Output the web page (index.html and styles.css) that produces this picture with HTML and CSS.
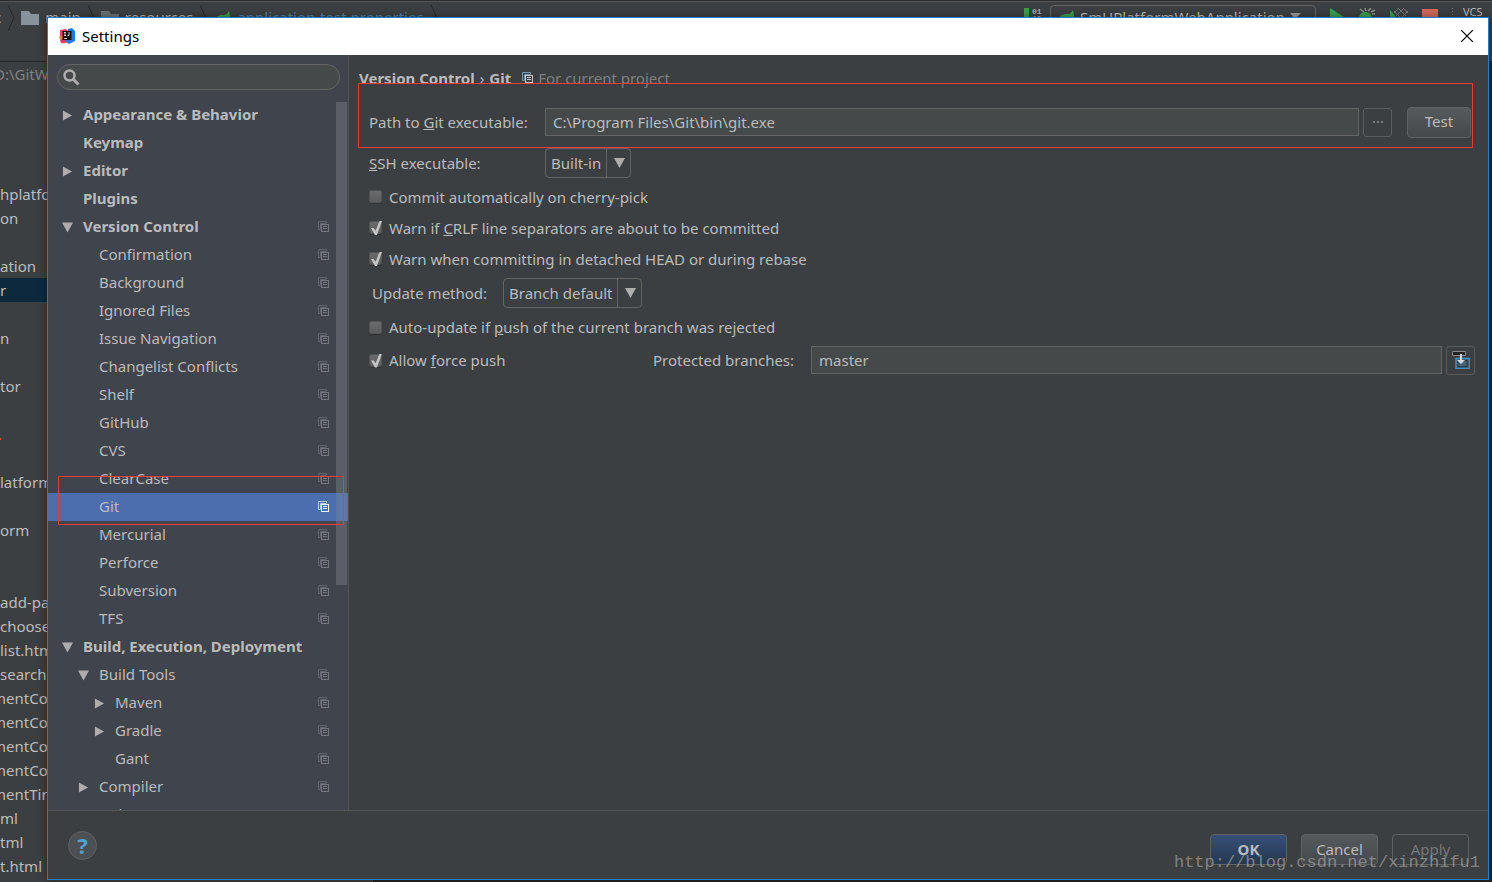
FILE: index.html
```html
<!DOCTYPE html>
<html lang="en">
<head>
<meta charset="utf-8">
<title>Settings</title>
<link rel="stylesheet" href="styles.css">
</head>
<body>
<svg class="defs" aria-hidden="true">
  <symbol id="copy" viewBox="0 0 12 12">
    <path d="M2.5 8.5h-2v-8h8v2M2.500 8V2.500H8" fill="none" stroke="var(--back)"/>
    <rect x="3.5" y="3.5" width="7" height="7" fill="none" stroke="var(--front)"/>
    <path d="M5 5.5h4M5 7.5h4" stroke="var(--front)"/>
  </symbol>
  <symbol id="folder" viewBox="0 0 18 14"><path d="M0 0h8l2 3h8v11H0z" fill="currentColor"/></symbol>
  <symbol id="chev" viewBox="0 0 8 26"><path d="M1 0l6 13-6 13" fill="none" stroke="#26282a" stroke-width="1"/></symbol>
  <symbol id="leaf" viewBox="0 0 18 14"><path d="M1 14C1 6 5 4 10 4c3 0 4-1 6-4 1 5 2 9 0 14z" fill="#3a9e4e"/></symbol>
  <symbol id="right" viewBox="0 0 10 12"><path d="M0 0.500L10 6 0 11.500z" fill="#adadad"/></symbol>
  <symbol id="down" viewBox="0 0 11 10"><path d="M0 0h11L5.500 10z" fill="#adadad"/></symbol>
</svg>

<div class="ide">
  <div class="toolbar">
    <div class="crumbs">
      <span class="src">c</span>
      <svg class="chev"><use href="#chev"/></svg>
      <svg class="folder"><use href="#folder"/></svg><span>main</span>
      <svg class="chev"><use href="#chev"/></svg>
      <svg class="folder dim"><use href="#folder"/></svg><span>resources</span>
      <svg class="chev"><use href="#chev"/></svg>
      <svg class="leaf"><use href="#leaf"/></svg><span class="file">application-test.properties</span>
      <svg class="chev"><use href="#chev"/></svg>
    </div>
    <div class="run">
      <svg width="18" height="18" viewBox="0 0 18 18"><path d="M0 0h5v18H0z" fill="#3a9e4e"/><text x="8" y="6" class="bits">01</text><text x="8" y="13" class="bits">10</text></svg>
      <button class="config"><svg class="leaf"><use href="#leaf"/></svg><span>SmUPlatformWebApplication</span><svg width="11" height="7"><path d="M0 0h11L5 6z" fill="#999"/></svg></button>
      <svg width="14" height="18"><path d="M0 0l14 9-14 9z" fill="#3a9e4e"/></svg>
      <svg width="18" height="18"><path d="M2 1l4 3M7 0l1 3M13 0l-3 3M17 2l-4 2M17 6h-3" stroke="#8a8a8a" stroke-width="1.500"/><path d="M1 10c0-8 12-8 13 0v8H1z" fill="#3a9e4e"/></svg>
      <svg width="18" height="18"><path d="M0 2l7 8-7 6z" fill="#3a9e4e"/><path d="M4 3l8 8M8 0l8 8M13 0l5 5M18 3l-8 8M14 0L6 8M9 0L4 5" stroke="#777" fill="none"/></svg>
      <svg class="stop" width="16" height="16"><path d="M0 0h16v16H0z" fill="#d0695f"/></svg>
      <svg width="1" height="20"><path d="M.5 0v20" stroke="#777" stroke-dasharray="1 2"/></svg>
      <span class="vcs">VCS</span><span class="vcs">VCS</span>
    </div>
  </div>
  <div class="navbar"></div>
  <div class="project">
    <div class="path">D:\GitW</div>
    <ul class="files">
      <li>hplatform</li><li>on</li><li></li><li>ation</li><li class="current">r</li><li></li><li>n</li><li></li><li>tor</li><li></li><li class="mark">.</li><li></li><li>latform</li><li></li><li>orm</li><li></li><li></li><li>add-pay</li><li>choose</li><li>list.html</li><li>search-l</li><li class="cut">mentCo</li><li class="cut">mentCo</li><li class="cut">mentCo</li><li class="cut">mentCo</li><li class="cut">mentTime</li><li>ml</li><li>tml</li><li>t.html</li>
    </ul>
  </div>
</div>

<main class="dialog">
  <header class="titlebar">
    <svg class="logo" viewBox="0 0 16 16"><path d="M1 2l6-1 4 4-8 6-2-3z" fill="#fb3a6a"/><path d="M0 9l5-3 3 9-5 .5z" fill="#f8743b"/><path d="M9 1l4-1 3 3v10l-6 3-4-3z" fill="#167df0"/><path d="M1 12l5-2 1 4-5 1z" fill="#e0356f"/><path d="M3.500 3h9v9h-9z" fill="#111"/><path d="M5 4.500h2M6 4.500v3M5 7.500h2M10 4v3.500H8.500M5 10.500h3" stroke="#ccc" fill="none"/></svg>
    <h1>Settings</h1>
    <button class="close" aria-label="Close"><svg width="12" height="12"><path d="M0 0l12 12M12 0L0 12" stroke="#000" stroke-width="1.200"/></svg></button>
  </header>

  <div class="body">
    <aside class="sidebar">
      <label class="search">
        <svg width="17" height="17"><circle cx="6.500" cy="6.500" r="5" fill="none" stroke="#adadad" stroke-width="2.500"/><path d="M10 10l5.500 5.500" stroke="#adadad" stroke-width="3"/></svg>
        <input type="text" aria-label="Search settings">
      </label>
      <ul class="tree">
        <li class="top"><svg class="tw"><use href="#right"/></svg><span>Appearance &amp; Behavior</span></li>
        <li class="top"><i class="tw"></i><span>Keymap</span></li>
        <li class="top"><svg class="tw"><use href="#right"/></svg><span>Editor</span></li>
        <li class="top"><i class="tw"></i><span>Plugins</span></li>
        <li class="top"><svg class="tw"><use href="#down"/></svg><span>Version Control</span><svg class="copy"><use href="#copy"/></svg></li>
        <li class="sub"><i class="tw"></i><span>Confirmation</span><svg class="copy"><use href="#copy"/></svg></li>
        <li class="sub"><i class="tw"></i><span>Background</span><svg class="copy"><use href="#copy"/></svg></li>
        <li class="sub"><i class="tw"></i><span>Ignored Files</span><svg class="copy"><use href="#copy"/></svg></li>
        <li class="sub"><i class="tw"></i><span>Issue Navigation</span><svg class="copy"><use href="#copy"/></svg></li>
        <li class="sub"><i class="tw"></i><span>Changelist Conflicts</span><svg class="copy"><use href="#copy"/></svg></li>
        <li class="sub"><i class="tw"></i><span>Shelf</span><svg class="copy"><use href="#copy"/></svg></li>
        <li class="sub"><i class="tw"></i><span>GitHub</span><svg class="copy"><use href="#copy"/></svg></li>
        <li class="sub"><i class="tw"></i><span>CVS</span><svg class="copy"><use href="#copy"/></svg></li>
        <li class="sub"><i class="tw"></i><span>ClearCase</span><svg class="copy"><use href="#copy"/></svg></li>
        <li class="sub selected"><i class="tw"></i><span>Git</span><svg class="copy"><use href="#copy"/></svg></li>
        <li class="sub"><i class="tw"></i><span>Mercurial</span><svg class="copy"><use href="#copy"/></svg></li>
        <li class="sub"><i class="tw"></i><span>Perforce</span><svg class="copy"><use href="#copy"/></svg></li>
        <li class="sub"><i class="tw"></i><span>Subversion</span><svg class="copy"><use href="#copy"/></svg></li>
        <li class="sub"><i class="tw"></i><span>TFS</span><svg class="copy"><use href="#copy"/></svg></li>
        <li class="top"><svg class="tw"><use href="#down"/></svg><span>Build, Execution, Deployment</span></li>
        <li class="sub"><svg class="tw"><use href="#down"/></svg><span>Build Tools</span><svg class="copy"><use href="#copy"/></svg></li>
        <li class="leafrow"><svg class="tw"><use href="#right"/></svg><span>Maven</span><svg class="copy"><use href="#copy"/></svg></li>
        <li class="leafrow"><svg class="tw"><use href="#right"/></svg><span>Gradle</span><svg class="copy"><use href="#copy"/></svg></li>
        <li class="leafrow"><i class="tw"></i><span>Gant</span><svg class="copy"><use href="#copy"/></svg></li>
        <li class="sub"><svg class="tw"><use href="#right"/></svg><span>Compiler</span><svg class="copy"><use href="#copy"/></svg></li>
        <li class="sub"><svg class="tw"><use href="#right"/></svg><span>Debugger</span></li>
      </ul>
      <div class="scrollbar"></div>
      <div class="callout callout-git"></div>
    </aside>

    <section class="content">
      <div class="heading"><b>Version Control</b><span class="sep">›</span><b>Git</b><svg class="copy lit"><use href="#copy"/></svg><span class="scope">For current project</span></div>
      <div class="row path-row">
        <label class="name" for="git">Path to <u>G</u>it executable:</label>
        <input class="field" id="git" type="text" value="C:\Program Files\Git\bin\git.exe">
        <button class="square" aria-label="Browse"><svg width="10" height="2"><path d="M0 1h2M4 1h2M8 1h2" stroke="#bbb"/></svg></button>
        <button class="btn test">Test</button>
      </div>
      <div class="row ssh-row">
        <label class="name" for="ssh"><u>S</u>SH executable:</label>
        <span class="select short"><select id="ssh"><option>Built-in</option><option>Native</option></select><svg><use href="#down"/></svg></span>
      </div>
      <label class="check"><input type="checkbox"><span>Commit automatically on cherry-pick</span></label>
      <label class="check"><input type="checkbox" checked><span>Warn if <u>C</u>RLF line separators are about to be committed</span></label>
      <label class="check"><input type="checkbox" checked><span>Warn when committing in detached HEAD or during rebase</span></label>
      <div class="row update-row">
        <label class="method" for="upd">Update method:</label>
        <span class="select long"><select id="upd"><option>Branch default</option><option>Merge</option><option>Rebase</option></select><svg><use href="#down"/></svg></span>
      </div>
      <label class="check"><input type="checkbox"><span>Auto-update if <u>p</u>ush of the current branch was rejected</span></label>
      <div class="row push-row">
        <label class="check"><input type="checkbox" checked><span>Allow <u>f</u>orce push</span></label>
        <label class="protected" for="prot">Protected branches:</label>
        <input class="field" id="prot" type="text" value="master">
        <button class="square" aria-label="Expand"><svg width="18" height="18"><path d="M.5.500h13v4H.5z" fill="#222" stroke="#8a8a8a"/><path d="M4 7.500h13.500v10H4z" fill="#35536a" stroke="#4a8db8" stroke-width="1.500"/><path d="M6 9.500h9v6H6z" fill="#466578" stroke="#2c3e4c"/><path d="M8 3h2v6h3l-4 4-4-4h3z" fill="#d8d8d8"/></svg></button>
      </div>
      <div class="callout callout-path"></div>
    </section>
  </div>

  <footer class="footer">
    <button class="help" aria-label="Help">?</button>
    <button class="btn ok">OK</button>
    <button class="btn">Cancel</button>
    <button class="btn off" disabled>Apply</button>
  </footer>
</main>
<div class="watermark">http://blog.csdn.net/xinzhifu1</div>
</body>
</html>
```
FILE: styles.css
```css
* { box-sizing: border-box; }
body {
  margin: 0;
  height: 100vh;
  overflow: hidden;
  position: relative;
  background: #3c3f41;
  color: #bbbbbb;
  font: 15px/24px "Noto Sans", "Open Sans", sans-serif;
}
button, input, select { font: inherit; color: inherit; margin: 0; }
ul { list-style: none; margin: 0; padding: 0; }
svg { flex: none; display: block; }
.defs { position: absolute; width: 0; height: 0; }

/* IDE behind the dialog */
.ide { height: 100%; background: linear-gradient(90deg, #3c3f41 25%, #232425 25%); overflow: hidden; }
.toolbar {
  height: 34px;
  display: flex;
  justify-content: space-between;
  border-top: 1px solid #2b2b2b;
  box-shadow: inset 0 1px #555758;
  background: #3c3f41;
  white-space: nowrap;
}
.crumbs { display: flex; align-items: center; gap: 6px; }
.crumbs span { padding-bottom: 1px; }
.src { margin-left: -6px; }
.chev { width: 8px; height: 26px; }
.folder { width: 18px; height: 14px; color: #87939a; }
.folder.dim { color: #6a7276; }
.leaf { width: 18px; height: 14px; }
.file { color: #5385a8; }
.run { display: flex; align-items: flex-start; gap: 14px; padding-top: 7px; margin-right: -24px; }
.bits { font: bold 8px "Liberation Mono", monospace; fill: #aaa; }
.config {
  display: flex;
  align-items: center;
  gap: 5px;
  width: 266px;
  height: 24px;
  margin: -3px 0 0 -6px;
  padding: 0 4px 1px 6px;
  background: none;
  border: 1px solid #666;
  border-radius: 4px;
  overflow: hidden;
}
.stop { margin-top: 1px; }
.run svg + .vcs { margin-left: -4px; }
.vcs { margin-top: -2px; font: 11px/12px "Noto Sans", sans-serif; }
.navbar { height: 28px; border-bottom: 1px solid #282828; background: #3c3f41; }
.path { margin-left: -6px; color: #7f8183; }
.files { margin-top: 96px; }
.files li { height: 24px; width: 48px; overflow: hidden; white-space: nowrap; }
.files .current { background: #0d293e; }
.files .mark { color: #cc6633; text-indent: -2px; }
.files .cut { text-indent: -8px; }

/* Dialog window */
.dialog {
  position: absolute;
  inset: 17px 3px 2px 47px;
  display: flex;
  flex-direction: column;
  background: #3c3f41;
  border: 1px solid #1e7fd0;
  box-shadow: 0 0 8px rgba(0, 0, 0, .4);
}
.titlebar {
  display: flex;
  align-items: center;
  gap: 7px;
  height: 37px;
  padding: 0 15px 1px 11px;
  background: #fff;
  color: #000;
}
.logo { width: 16px; height: 16px; }
.titlebar h1 { margin: 0; font-size: 15px; font-weight: 400; }
.close { margin-left: auto; padding: 0; border: 0; background: none; }
.body { flex: 1; min-height: 0; display: flex; }

.sidebar {
  position: relative;
  width: 301px;
  flex: none;
  display: flex;
  flex-direction: column;
  background: #40444d;
  border-right: 1px solid #515355;
}
.search {
  display: flex;
  align-items: center;
  gap: 6px;
  flex: none;
  height: 26px;
  margin: 9px 8px 11px 9px;
  padding: 0 12px 0 5px;
  background: #454949;
  border: 1px solid #646464;
  border-radius: 13px;
}
.search input { flex: 1; min-width: 0; background: none; border: 0; outline: 0; }
.tree { flex: 1; min-height: 0; overflow: hidden; }
.tree li { display: flex; align-items: center; height: 28px; padding-right: 18px; }
.tree span { flex: 1; padding-bottom: 2px; white-space: nowrap; }
.tree .top { padding-left: 14px; font-weight: 700; }
.tree .sub { padding-left: 30px; }
.tree .leafrow { padding-left: 46px; }
.tree .selected { background: #4b6eaf; }
.tw { width: 11px; height: 11px; margin-right: 10px; flex: none; }
.copy { width: 12px; height: 12px; --back: #60666d; --front: #74777b; }
.selected .copy { --back: #b8cbe0; --front: #f0f0f0; }
.copy.lit { --back: #7f99a8; --front: #c8c8c8; }
.scrollbar {
  position: absolute;
  top: 47px;
  right: 1px;
  width: 11px;
  height: 483px;
  background: rgba(138, 138, 144, .38);
}
.callout { position: absolute; border: 1px solid #f03a3a; pointer-events: none; }
.callout-git { left: 10px; top: 421px; width: 286px; height: 49px; }
.callout-path { left: 9px; right: 15px; top: 28px; height: 65px; }

.content { position: relative; flex: 1; min-width: 0; padding: 11px 13px 0 20px; }
.heading { display: flex; align-items: center; margin-left: -10px; height: 24px; }
.heading .sep { margin: 0 5px; }
.heading .copy { margin: 0 4px 0 11px; }
.scope { color: #7d7f80; }
.row { display: flex; align-items: center; }
.name { width: 176px; flex: none; }
.path-row { height: 32px; margin: 16px 4px 0 0; }
.field {
  flex: 1;
  min-width: 0;
  height: 28px;
  padding: 0 7px;
  background: #45494a;
  border: 1px solid #646464;
}
.square {
  display: flex;
  align-items: center;
  justify-content: center;
  width: 29px;
  height: 29px;
  flex: none;
  margin-left: 4px;
  padding: 0;
  background: none;
  border: 1px solid #5a5d5e;
  border-radius: 3px;
}
.btn {
  width: 77px;
  height: 31px;
  padding: 0 0 2px;
  background: linear-gradient(#555a5c, #45494b);
  border: 1px solid #5e6162;
  border-radius: 4px;
}
.test { width: 64px; margin-left: 15px; }
.ssh-row { height: 30px; margin: 10px 0 3px; }
.select { position: relative; display: block; height: 30px; }
.short { width: 86px; }
.long { width: 139px; }
.select select {
  appearance: none;
  width: 100%;
  height: 100%;
  padding: 0 24px 0 5px;
  background: linear-gradient(#646464, #646464) right 23px top 0 / 1px 100% no-repeat;
  border: 1px solid #646464;
  border-radius: 4px;
}
.select svg { position: absolute; right: 6px; top: 10px; width: 11px; height: 10px; pointer-events: none; }
.check { display: flex; align-items: center; gap: 7px; height: 31px; white-space: nowrap; }
.check input {
  appearance: none;
  width: 13px;
  height: 13px;
  position: relative;
  background: linear-gradient(#6a6b6c, #5a5c5d);
  border: 1px solid #505253;
  border-radius: 2px;
  box-shadow: 0 1px #303234;
}
.check input:checked::after {
  content: "";
  position: absolute;
  inset: -1px -1px -2px 1px;
  background: #c4c4c4;
  clip-path: polygon(0 50%, 25% 50%, 42% 70%, 78% 0, 100% 0, 54% 100%, 36% 100%);
}
.update-row { height: 34px; margin: 0 0 2px 3px; padding-top: 4px; }
.method { width: 131px; }
.update-row + .check { height: 34px; }
.push-row { height: 32px; }
.push-row .check { width: 284px; }
.protected { width: 158px; white-space: nowrap; }

.footer {
  display: flex;
  align-items: flex-start;
  gap: 14px;
  height: 69px;
  padding: 23px 19px 0 20px;
  border-top: 1px solid #555555;
}
.help {
  width: 29px;
  height: 29px;
  margin: -3px auto 0 0;
  padding: 0 0 2px;
  border: 1px solid #5e6162;
  border-radius: 50%;
  background: #4c5052;
  color: #4fa3cf;
  font-size: 22px;
  font-weight: 700;
  line-height: 24px;
}
.ok { background: linear-gradient(#365078, #263850); font-weight: 700; }
.off { background: none; color: #777; }
.watermark {
  position: absolute;
  right: 12px;
  bottom: 7px;
  color: rgba(170, 170, 165, .65);
  font: 17px/24px "Liberation Mono", monospace;
}
```
